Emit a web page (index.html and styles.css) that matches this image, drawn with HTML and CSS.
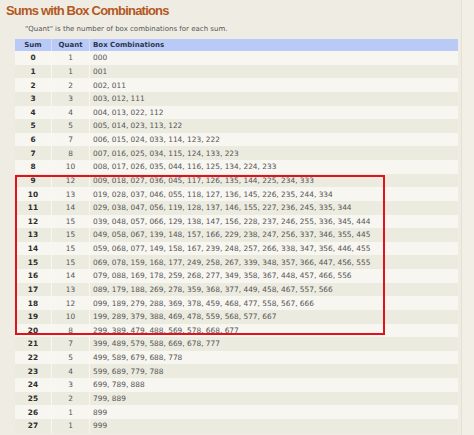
FILE: index.html
```html
<!DOCTYPE html>
<html>
<head>
<meta charset="utf-8">
<link rel="stylesheet" href="styles.css">
</head>
<body>
<div class="page">
  <div class="panel">
    <h1 class="title">Sums with Box Combinations</h1>
    <p class="note">"Quant" is the number of box combinations for each sum.</p>
    <div class="table-wrap">
      <table class="sums">
        <thead>
          <tr><th class="c-sum">Sum</th><th class="c-q">Quant</th><th class="c-box">Box Combinations</th></tr>
        </thead>
        <tbody>
          <tr><td class="c-sum">0</td><td class="c-q">1</td><td class="c-box">000</td></tr>
          <tr><td class="c-sum">1</td><td class="c-q">1</td><td class="c-box">001</td></tr>
          <tr><td class="c-sum">2</td><td class="c-q">2</td><td class="c-box">002, 011</td></tr>
          <tr><td class="c-sum">3</td><td class="c-q">3</td><td class="c-box">003, 012, 111</td></tr>
          <tr><td class="c-sum">4</td><td class="c-q">4</td><td class="c-box">004, 013, 022, 112</td></tr>
          <tr><td class="c-sum">5</td><td class="c-q">5</td><td class="c-box">005, 014, 023, 113, 122</td></tr>
          <tr><td class="c-sum">6</td><td class="c-q">7</td><td class="c-box">006, 015, 024, 033, 114, 123, 222</td></tr>
          <tr><td class="c-sum">7</td><td class="c-q">8</td><td class="c-box">007, 016, 025, 034, 115, 124, 133, 223</td></tr>
          <tr><td class="c-sum">8</td><td class="c-q">10</td><td class="c-box">008, 017, 026, 035, 044, 116, 125, 134, 224, 233</td></tr>
          <tr><td class="c-sum">9</td><td class="c-q">12</td><td class="c-box">009, 018, 027, 036, 045, 117, 126, 135, 144, 225, 234, 333</td></tr>
          <tr><td class="c-sum">10</td><td class="c-q">13</td><td class="c-box">019, 028, 037, 046, 055, 118, 127, 136, 145, 226, 235, 244, 334</td></tr>
          <tr><td class="c-sum">11</td><td class="c-q">14</td><td class="c-box">029, 038, 047, 056, 119, 128, 137, 146, 155, 227, 236, 245, 335, 344</td></tr>
          <tr><td class="c-sum">12</td><td class="c-q">15</td><td class="c-box">039, 048, 057, 066, 129, 138, 147, 156, 228, 237, 246, 255, 336, 345, 444</td></tr>
          <tr><td class="c-sum">13</td><td class="c-q">15</td><td class="c-box">049, 058, 067, 139, 148, 157, 166, 229, 238, 247, 256, 337, 346, 355, 445</td></tr>
          <tr><td class="c-sum">14</td><td class="c-q">15</td><td class="c-box">059, 068, 077, 149, 158, 167, 239, 248, 257, 266, 338, 347, 356, 446, 455</td></tr>
          <tr><td class="c-sum">15</td><td class="c-q">15</td><td class="c-box">069, 078, 159, 168, 177, 249, 258, 267, 339, 348, 357, 366, 447, 456, 555</td></tr>
          <tr><td class="c-sum">16</td><td class="c-q">14</td><td class="c-box">079, 088, 169, 178, 259, 268, 277, 349, 358, 367, 448, 457, 466, 556</td></tr>
          <tr><td class="c-sum">17</td><td class="c-q">13</td><td class="c-box">089, 179, 188, 269, 278, 359, 368, 377, 449, 458, 467, 557, 566</td></tr>
          <tr><td class="c-sum">18</td><td class="c-q">12</td><td class="c-box">099, 189, 279, 288, 369, 378, 459, 468, 477, 558, 567, 666</td></tr>
          <tr><td class="c-sum">19</td><td class="c-q">10</td><td class="c-box">199, 289, 379, 388, 469, 478, 559, 568, 577, 667</td></tr>
          <tr><td class="c-sum">20</td><td class="c-q">8</td><td class="c-box">299, 389, 479, 488, 569, 578, 668, 677</td></tr>
          <tr><td class="c-sum">21</td><td class="c-q">7</td><td class="c-box">399, 489, 579, 588, 669, 678, 777</td></tr>
          <tr><td class="c-sum">22</td><td class="c-q">5</td><td class="c-box">499, 589, 679, 688, 778</td></tr>
          <tr><td class="c-sum">23</td><td class="c-q">4</td><td class="c-box">599, 689, 779, 788</td></tr>
          <tr><td class="c-sum">24</td><td class="c-q">3</td><td class="c-box">699, 789, 888</td></tr>
          <tr><td class="c-sum">25</td><td class="c-q">2</td><td class="c-box">799, 889</td></tr>
          <tr><td class="c-sum">26</td><td class="c-q">1</td><td class="c-box">899</td></tr>
          <tr><td class="c-sum">27</td><td class="c-q">1</td><td class="c-box">999</td></tr>
        </tbody>
      </table>
      <div class="highlight"></div>
    </div>
  </div>
</div>
</body>
</html>
```

FILE: styles.css
```css
html, body {
  margin: 0;
  padding: 0;
  background: #f1efe6;
}
.page {
  width: 474px;
  height: 435px;
  overflow: hidden;
  background: #f1efe6;
}
.panel {
  width: 462px;
  border-right: 1px solid #e3e1d5;
  background: #efede3;
  min-height: 435px;
  box-sizing: border-box;
}
.title {
  margin: 0;
  padding: 3px 0 0 6px;
  height: 17px;
  font-family: "Liberation Sans", Arial, sans-serif;
  font-weight: bold;
  font-size: 13px;
  line-height: 15px;
  letter-spacing: -0.8px;
  color: #b3581f;
}
.note {
  margin: 0;
  padding: 3px 0 0 25px;
  height: 16px;
  box-sizing: border-box;
  font-family: "DejaVu Sans", Verdana, sans-serif;
  font-size: 7px;
  line-height: 12px;
  color: #555;
}
.table-wrap {
  position: relative;
  margin: 3px 0 0 15px;
  width: 443px;
}
.sums {
  width: 443px;
  border-collapse: collapse;
  table-layout: fixed;
  font-family: "DejaVu Sans", Verdana, sans-serif;
  font-size: 7.4px;
  color: #555;
}
.sums th {
  background: #b9caf7;
  height: 12px;
  padding: 0;
  font-weight: bold;
  font-size: 7px;
  color: #2c3550;
  border-left: 1px solid #d6def7;
}
.sums th:first-child, .sums td:first-child { border-left: none; }
.sums td {
  height: 13.63px;
  padding: 0;
  border-left: 1px solid #f8f7f2;
}
.sums tbody tr:nth-child(odd) td { background: #f7f6f0; }
.sums tbody tr:nth-child(even) td { background: #ecebe0; }
.c-sum { width: 36px; text-align: center; }
.c-q { width: 37px; text-align: center; }
.c-box { text-align: left; padding-left: 3px !important; }
td.c-sum { font-weight: bold; color: #2e2e2e; }
.highlight {
  position: absolute;
  left: 0;
  top: 136px;
  width: 370px;
  height: 160px;
  border: 2px solid #e2111b;
  box-sizing: border-box;
  pointer-events: none;
}
```
